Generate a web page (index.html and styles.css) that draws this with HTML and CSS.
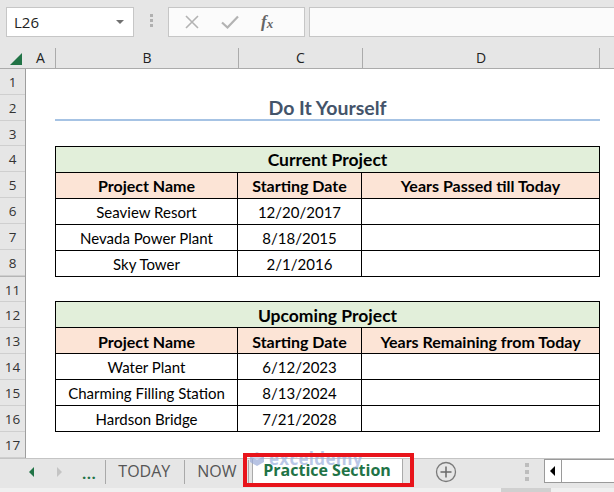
FILE: index.html
```html
<!DOCTYPE html>
<html>
<head>
<meta charset="utf-8">
<link rel="stylesheet" href="styles.css">
</head>
<body>
<div class="app">
  <div class="formula-bar">
    <div class="namebox"><span>L26</span><span class="dd"></span></div>
    <div class="vdots"><i></i><i></i><i></i></div>
    <div class="fxbtns">
      <svg class="ico-x" width="14" height="14" viewBox="0 0 14 14"><path d="M1 1L13 13M13 1L1 13" stroke="#b3b3b3" stroke-width="1.6" fill="none"/></svg>
      <svg class="ico-ok" width="18" height="14" viewBox="0 0 18 14"><path d="M1 7.5L6.5 12.5L17 1.5" stroke="#b3b3b3" stroke-width="2.2" fill="none"/></svg>
      <span class="fx">f<sub>x</sub></span>
    </div>
    <div class="finput"></div>
  </div>

  <div class="colhdr">
    <div class="corner"><span class="tri"></span></div>
    <div class="ch ca">A</div>
    <div class="ch cb">B</div>
    <div class="ch cc">C</div>
    <div class="ch cd">D</div>
    <div class="ch ce"></div>
  </div>

  <div class="sheet">
    <div class="rowhdr">
      <div class="rn">1</div>
      <div class="rn">2</div>
      <div class="rn short">3</div>
      <div class="rn">4</div>
      <div class="rn">5</div>
      <div class="rn">6</div>
      <div class="rn">7</div>
      <div class="rn">8</div>
      <div class="rn hid">11</div>
      <div class="rn">12</div>
      <div class="rn">13</div>
      <div class="rn">14</div>
      <div class="rn">15</div>
      <div class="rn">16</div>
      <div class="rn">17</div>
    </div>
    <div class="cells">
      <div class="blank"></div>
      <div class="title">Do It Yourself</div>
      <div class="blank short"></div>
      <div class="tbl">
        <div class="c head">Current Project</div>
        <div class="c sub">Project Name</div>
        <div class="c sub">Starting Date</div>
        <div class="c sub">Years Passed till Today</div>
        <div class="c">Seaview Resort</div>
        <div class="c">12/20/2017</div>
        <div class="c"></div>
        <div class="c">Nevada Power Plant</div>
        <div class="c">8/18/2015</div>
        <div class="c"></div>
        <div class="c">Sky Tower</div>
        <div class="c">2/1/2016</div>
        <div class="c"></div>
      </div>
      <div class="blank short"></div>
      <div class="tbl">
        <div class="c head">Upcoming Project</div>
        <div class="c sub">Project Name</div>
        <div class="c sub">Starting Date</div>
        <div class="c sub">Years Remaining from Today</div>
        <div class="c">Water Plant</div>
        <div class="c">6/12/2023</div>
        <div class="c"></div>
        <div class="c">Charming Filling Station</div>
        <div class="c">8/13/2024</div>
        <div class="c"></div>
        <div class="c">Hardson Bridge</div>
        <div class="c">7/21/2028</div>
        <div class="c"></div>
      </div>
      <div class="blank"></div>
    </div>
  </div>

  <div class="tabbar">
    <div class="tabs">
      <span class="nav-l"></span>
      <span class="nav-r"></span>
      <span class="more">...</span>
      <span class="sep s1"></span>
      <span class="tab t1">TODAY</span>
      <span class="sep"></span>
      <span class="tab t2">NOW</span>
      <span class="sep"></span>
      <span class="tab active">Practice Section</span>
      <span class="plus">
        <svg width="22" height="22" viewBox="0 0 22 22"><circle cx="11" cy="11" r="9.5" stroke="#7a7a7a" stroke-width="1.3" fill="none"/><path d="M11 5.5V16.5M5.5 11H16.5" stroke="#6a6a6a" stroke-width="1.5"/></svg>
      </span>
      <span class="vdots tabdots"><i></i><i></i><i></i></span>
      <span class="hscroll"><span class="harrow"></span></span>
    </div>
    <div class="hstrip"><span class="thumb"></span></div>
    <div class="watermark">
      <svg width="16" height="16" viewBox="0 0 16 16"><path d="M8 1L15 5V11L8 15L1 11V5Z" fill="#9aaad8"/><path d="M8 1L15 5L8 9L1 5Z" fill="#c3cdea"/></svg>
      <span>exceldemy</span>
    </div>
    <div class="redbox"></div>
  </div>
</div>
</body>
</html>
```

FILE: styles.css
```css
* { box-sizing: border-box; margin: 0; padding: 0; }
html, body { width: 614px; height: 492px; overflow: hidden; }
body { background: #fff; font-family: "Open Sans", "DejaVu Sans", sans-serif; }

.app { display: flex; flex-direction: column; height: 492px; }

/* formula bar */
.formula-bar {
  height: 47px;
  background: #e6e6e6;
  display: flex;
  align-items: flex-start;
  padding: 7px 0 0 6px;
}
.namebox {
  width: 128px; height: 30px;
  background: #fff;
  border: 1px solid #c6c6c6;
  display: flex; align-items: center; justify-content: space-between;
  padding: 0 9px 0 7px;
  font-size: 15px; color: #222;
}
.dd {
  width: 0; height: 0;
  border-left: 4px solid transparent;
  border-right: 4px solid transparent;
  border-top: 4px solid #707070;
}
.vdots { display: flex; flex-direction: column; gap: 2px; margin: 7px 15px 0 16px; }
.vdots i { display: block; width: 3px; height: 3px; background: #b0b0b0; }
.fxbtns {
  width: 137px; height: 30px;
  background: #fbfbfb;
  border: 1px solid #c6c6c6;
  display: flex; align-items: center;
  padding-left: 16px;
}
.ico-x { margin-right: 22px; }
.ico-ok { margin-right: 22px; }
.fx { font-family: "Liberation Serif", serif; font-style: italic; font-size: 17px; color: #666; font-weight: bold; }
.fx sub { font-size: 13px; vertical-align: -1px; }
.finput {
  flex: 1; height: 30px; margin-left: 4px;
  background: #fbfbfb;
  border: 1px solid #c6c6c6; border-right: none;
}

/* column header */
.colhdr {
  height: 22px;
  background: #e6e6e6;
  display: flex;
  border-bottom: 1px solid #ababab;
  font-size: 14px; color: #222;
}
.corner { width: 26px; position: relative; }
.tri {
  position: absolute; right: 4px; bottom: 3px;
  width: 0; height: 0;
  border-left: 12px solid transparent;
  border-bottom: 12px solid #217346;
}
.ch {
  display: flex; align-items: center; justify-content: center;
  border-right: 1px solid #ababab;
  margin-top: 1px;
  padding-bottom: 1px;
}
.ca { width: 30px; }
.cb { width: 183px; }
.cc { width: 124px; }
.cd { width: 237px; }
.ce { flex: 1; border-right: none; }

/* sheet */
.sheet { display: flex; flex: 1; overflow: hidden; }
.rowhdr {
  width: 26px;
  background: #e6e6e6;
  border-right: 1px solid #9e9e9e;
  display: flex; flex-direction: column;
}
.rn {
  height: 26px;
  border-bottom: 1px solid #cfcfcf;
  display: flex; align-items: center; justify-content: center;
  font-size: 13.5px; color: #333;
  padding-top: 1px;
}
.rn.short { height: 25px; }
.rn.hid { height: 26px; border-top: 1px solid #b5b5b5; padding-top: 1px; }

.cells {
  flex: 1;
  padding-left: 29px;
  display: flex; flex-direction: column;
  font-family: "Lato", "Liberation Sans", sans-serif;
  font-size: 15px; color: #000;
}
.blank { height: 26px; }
.blank.short { height: 25px; }
.title {
  width: 545px; height: 26px;
  border-bottom: 2px solid #a6c3e4;
  display: flex; align-items: center; justify-content: center;
  font-weight: bold; font-size: 19.5px; color: #44546a;
  padding-top: 1px;
}
.tbl {
  width: 545px;
  display: grid;
  grid-template-columns: 183px 124px 238px;
  border-top: 1px solid #000;
}
.c {
  height: 26px;
  border-right: 1px solid #000;
  border-bottom: 1px solid #000;
  display: flex; align-items: center; justify-content: center;
  padding-top: 1px;
}
.c:nth-child(3n+2) { border-left: 1px solid #000; }
.c.head {
  background: #e2efda; font-weight: bold; font-size: 17.5px;
  grid-column: 1 / span 3; border-left: 1px solid #000;
}
.c.sub { background: #fce4d6; font-weight: bold; font-size: 16px; }

/* tab bar */
.tabbar {
  height: 34px;
  background: #e6e6e6;
  border-top: 1px solid #c4c4c4;
  position: relative;
  display: flex; flex-direction: column;
}
.tabs { height: 29px; display: flex; align-items: center; }
.nav-l {
  margin-left: 29px; margin-top: -4px;
  width: 0; height: 0;
  border-top: 5px solid transparent;
  border-bottom: 5px solid transparent;
  border-right: 5px solid #217346;
}
.nav-r {
  margin-left: 23px; margin-top: -4px;
  width: 0; height: 0;
  border-top: 5px solid transparent;
  border-bottom: 5px solid transparent;
  border-left: 5px solid #c4c4c4;
}
.more { margin-left: 20px; color: #217346; font-weight: bold; font-size: 15px; letter-spacing: 0.5px; margin-top: -2px; }
.sep { width: 1px; height: 24px; background: #a9a9a9; margin-top: -3px; }
.sep.s1 { margin-left: 9px; }
.tab { font-size: 16px; color: #555; margin-top: -6px; }
.t1 { padding: 0 14px 0 12px; }
.t2 { padding: 0 11px 0 12px; }
.tab.active {
  align-self: flex-start;
  margin-top: 0;
  margin-left: 3px;
  width: 151px; height: 25px;
  background: #fff;
  border: 1px solid #aaa; border-top: none;
  color: #217346; font-weight: bold; font-size: 16px;
  display: flex; align-items: center; justify-content: center;
  padding: 0 0 2px 0;
}
.plus { margin-left: 32px; display: flex; align-items: center; margin-top: -4px; }
.tabdots { margin: -3px 0 0 68px; gap: 3px; }
.tabdots i { width: 4px; height: 4px; background: #bdbdbd; }
.hscroll {
  margin-left: 15px; margin-top: -5px;
  flex: 1; height: 24px;
  background: #fff;
  border: 1px solid #9a9a9a; border-right: none;
  display: flex;
}
.harrow {
  width: 17px; height: 100%;
  border-right: 1px solid #9a9a9a;
  display: flex; align-items: center; justify-content: center;
}
.harrow::before {
  content: "";
  width: 0; height: 0;
  border-top: 5px solid transparent;
  border-bottom: 5px solid transparent;
  border-right: 5px solid #000;
}
.hstrip { flex: 1; background: #f0f0f0; position: relative; }
.thumb { position: absolute; left: 501px; top: 0; width: 50px; height: 4px; background: #d0d0d0; }
.watermark {
  position: absolute; left: 249px; top: -12px;
  display: flex; align-items: center; gap: 4px;
  opacity: 0.7;
  pointer-events: none;
}
.watermark span {
  font-family: "Open Sans", sans-serif; font-weight: bold; font-size: 17px;
  color: #9eb0dd; letter-spacing: 0.3px;
}
.redbox {
  position: absolute; left: 243px; top: -6px;
  width: 171px; height: 34px;
  border: 4px solid #e8141b;
}
```
